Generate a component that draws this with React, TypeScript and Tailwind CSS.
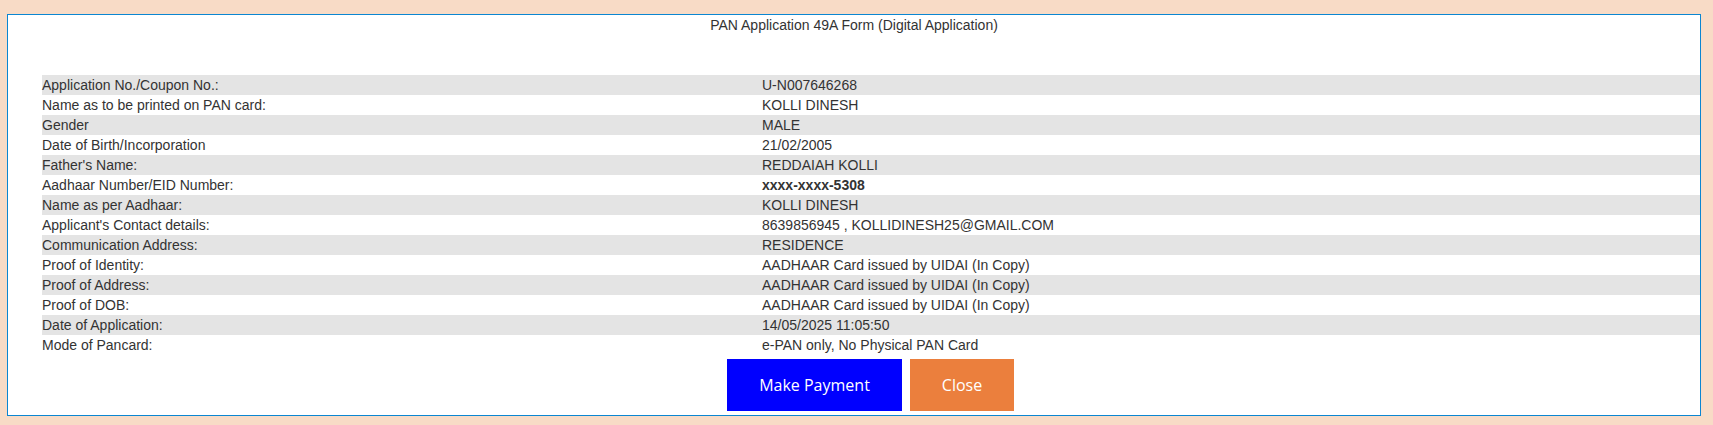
import React from "react";

const rows: { label: string; value: string; bold?: boolean }[] = [
  { label: "Application No./Coupon No.:", value: "U-N007646268" },
  { label: "Name as to be printed on PAN card:", value: "KOLLI DINESH" },
  { label: "Gender", value: "MALE" },
  { label: "Date of Birth/Incorporation", value: "21/02/2005" },
  { label: "Father's Name:", value: "REDDAIAH KOLLI" },
  { label: "Aadhaar Number/EID Number:", value: "xxxx-xxxx-5308", bold: true },
  { label: "Name as per Aadhaar:", value: "KOLLI DINESH" },
  { label: "Applicant's Contact details:", value: "8639856945 , KOLLIDINESH25@GMAIL.COM" },
  { label: "Communication Address:", value: "RESIDENCE" },
  { label: "Proof of Identity:", value: "AADHAAR Card issued by UIDAI (In Copy)" },
  { label: "Proof of Address:", value: "AADHAAR Card issued by UIDAI (In Copy)" },
  { label: "Proof of DOB:", value: "AADHAAR Card issued by UIDAI (In Copy)" },
  { label: "Date of Application:", value: "14/05/2025 11:05:50" },
  { label: "Mode of Pancard:", value: "e-PAN only, No Physical PAN Card" },
];

export default function App() {
  return (
    <div className="w-[1713px] h-[425px] bg-[#f8dbc6] pt-[14px] pl-[7px] overflow-hidden">
      <div
        className="w-[1694px] h-[402px] bg-white border border-[#0b86d1] text-[#333333] text-[14px] leading-[20px]"
        style={{ fontFamily: '"Liberation Sans", Arial, sans-serif' }}
      >
        <div className="text-center h-[20px]">PAN Application 49A Form (Digital Application)</div>
        <div className="h-[40px]" />
        <div className="ml-[34px]">
          {rows.map((r, i) => (
            <div key={i} className={`flex h-[20px] ${i % 2 === 0 ? "bg-[#e4e4e4]" : "bg-white"}`}>
              <div className="w-[720px] shrink-0">{r.label}</div>
              <div className={r.bold ? "font-bold" : ""}>{r.value}</div>
            </div>
          ))}
        </div>
        <div className="flex gap-[8px] ml-[719px] mt-[4px]" style={{ fontFamily: '"Open Sans", sans-serif' }}>
          <button className="w-[175px] h-[52px] bg-[#0000ff] text-white text-[16px]">Make Payment</button>
          <button className="w-[104px] h-[52px] bg-[#eb7f3d] text-white text-[16px]">Close</button>
        </div>
      </div>
    </div>
  );
}
